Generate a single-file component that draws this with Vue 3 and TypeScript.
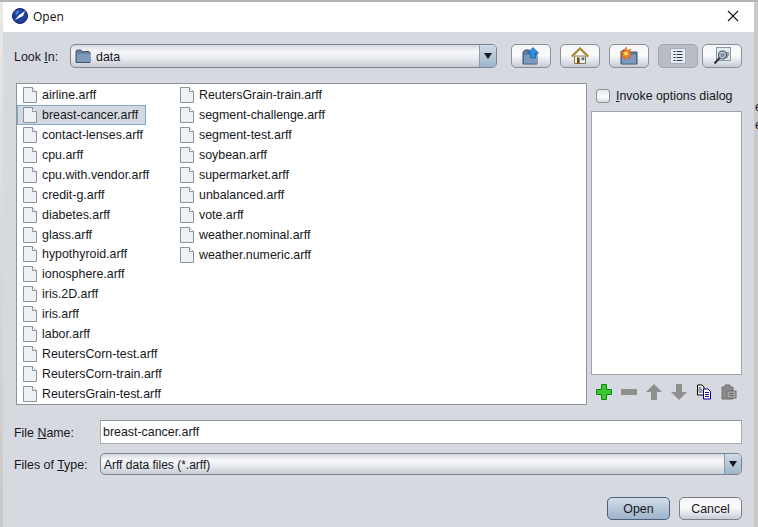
<script setup lang="ts">
const col1: string[] = ['airline.arff','breast-cancer.arff','contact-lenses.arff','cpu.arff','cpu.with.vendor.arff','credit-g.arff','diabetes.arff','glass.arff','hypothyroid.arff','ionosphere.arff','iris.2D.arff','iris.arff','labor.arff','ReutersCorn-test.arff','ReutersCorn-train.arff','ReutersGrain-test.arff']
const col2: string[] = ['ReutersGrain-train.arff','segment-challenge.arff','segment-test.arff','soybean.arff','supermarket.arff','unbalanced.arff','vote.arff','weather.nominal.arff','weather.numeric.arff']
const columns = [col1, col2]
const selected = 'breast-cancer.arff'
</script>

<template>
  <div class="page">
    <div class="strip-left"></div>
    <div class="window">
      <header class="titlebar">
        <svg class="app-icon" width="16" height="16" viewBox="0 0 16 16">
          <circle cx="8" cy="8" r="7.5" fill="#1d3f9c"/>
          <circle cx="8" cy="8" r="7.5" fill="none" stroke="#12235f" stroke-width="1"/>
          <path d="M3 12 L7 7 L13 3 L11 8 L7 10 Z" fill="#fff"/>
          <path d="M3 5 A6 6 0 0 1 8 2 L5 7 Z" fill="#4c86d8"/>
        </svg>
        <span class="title">Open</span>
        <svg class="close" width="12" height="12" viewBox="0 0 12 12">
          <path d="M1 1 L11 11 M11 1 L1 11" stroke="#111" stroke-width="1.1" fill="none"/>
        </svg>
      </header>

      <div class="body">
        <div class="lookin">
          <label class="lookin-label">Look <u>I</u>n:</label>
          <div class="combo lookin-combo">
            <svg width="16" height="16" viewBox="0 0 16 16" class="combo-icon">
              <path d="M1 14.5 V3 L2 2 H6 L7 3.5 H14 L15 4.5 V14.5 Z" fill="#68829f" stroke="#3e5470"/>
              <path d="M2 6 H15 V14 H2 Z" fill="#7f9ab8"/>
            </svg>
            <span class="combo-text">data</span>
            <span class="combo-arrow"><i></i></span>
          </div>
          <div class="tools">
            <button class="tool">
              <svg width="18" height="18" viewBox="0 0 18 18">
                <path d="M1 17 V5 L3 3 H7 L8 5 H15 V17 Z" fill="#5f7f9f" stroke="#3d5570"/>
                <path d="M2 8 H15 V16.5 H2 Z" fill="#7c9abc"/>
                <path d="M11 0.5 L16.5 6 H13.5 V11 H8.5 V6 H5.5 Z" fill="#2e8fdc" stroke="#145a9c" stroke-width="0.7"/>
              </svg>
            </button>
            <button class="tool">
              <svg width="18" height="18" viewBox="0 0 18 18">
                <path d="M3.5 9 V16.5 H14.5 V9 Z" fill="#f6f3e6" stroke="#6b5b2c" stroke-width="0.8"/>
                <path d="M0.8 9.5 L9 1.5 L17.2 9.5" fill="none" stroke="#8a6a1a" stroke-width="2"/>
                <path d="M0.8 9.5 L9 1.5 L17.2 9.5" fill="none" stroke="#dcae3c" stroke-width="0.9"/>
                <rect x="6" y="10.5" width="2.6" height="6" fill="#6a4a1c"/>
                <rect x="10.5" y="10.5" width="2.8" height="2.6" fill="#3f6ea6"/>
              </svg>
            </button>
            <button class="tool">
              <svg width="18" height="18" viewBox="0 0 18 18">
                <path d="M1 17 V5 L3 3 H7 L8 5 H17 V17 Z" fill="#5f7f9f" stroke="#3d5570"/>
                <path d="M2 8 H16 V16.5 H2 Z" fill="#7c9abc"/>
                <path d="M6 0 L7.2 3.6 L11 2 L9.2 5.6 L12.5 7 L9 8.2 L10.4 12 L6.8 10 L5 13 L4.2 9.6 L0.6 10 L3 7 L0.4 4.4 L4 4.4 Z" fill="#f58a12" stroke="#e4471a" stroke-width="0.5"/>
                <circle cx="6" cy="6.6" r="1.8" fill="#ffe48a"/>
              </svg>
            </button>
            <button class="tool tool-on">
              <svg width="16" height="16" viewBox="0 0 16 16">
                <rect x="0.5" y="0.5" width="15" height="15" fill="#e9eef4" stroke="#9fb0c2"/>
                <path d="M3.5 3.5h2M3.5 6.5h2M3.5 9.5h2M3.5 12.5h2M6.5 3.5h6M6.5 6.5h6M6.5 9.5h6M6.5 12.5h6" stroke="#2b3440" stroke-width="1"/>
              </svg>
            </button>
            <button class="tool">
              <svg width="18" height="18" viewBox="0 0 18 18">
                <rect x="3.5" y="0.5" width="14" height="13" fill="#e4e9ef" stroke="#8a97a6"/>
                <path d="M12 6h4M12 8h4M12 10h3" stroke="#555"/>
                <circle cx="9.5" cy="8" r="4" fill="#b6c6d8" stroke="#45525f" stroke-width="1.1"/>
                <path d="M7.5 7.2h4M7.5 9h4" stroke="#586778"/>
                <path d="M6.5 11 L1.5 16.5" stroke="#2a2f36" stroke-width="2"/>
              </svg>
            </button>
          </div>
        </div>

        <div class="main">
          <div class="list">
            <div v-for="(col, i) in columns" :key="i" class="list-col">
              <div v-for="f in col" :key="f" class="file" :class="{ selected: f === selected }">
                <svg class="file-icon" width="14" height="16" viewBox="0 0 14 16">
                  <path d="M0.5 0.5 H9.5 L13.5 4.5 V15.5 H0.5 Z" fill="#eef2f7" stroke="#8a929c"/>
                  <path d="M9.5 0.5 V4.5 H13.5" fill="#fbfcfd" stroke="#8a929c"/>
                </svg>
                <span>{{ f }}</span>
              </div>
            </div>
          </div>
          <aside class="side">
            <label class="check-row">
              <span class="check"></span>
              <span><u>I</u>nvoke options dialog</span>
            </label>
            <div class="preview"></div>
            <div class="mini-tools">
              <svg width="16" height="16" viewBox="0 0 16 16">
                <path d="M5.5 0.5 H10.5 V5.5 H15.5 V10.5 H10.5 V15.5 H5.5 V10.5 H0.5 V5.5 H5.5 Z" fill="#3cc92e" stroke="#0d8a0d"/>
              </svg>
              <svg width="16" height="16" viewBox="0 0 16 16"><rect x="0" y="5" width="16" height="6" fill="#8f8f8f"/></svg>
              <svg width="16" height="16" viewBox="0 0 16 16"><path d="M8 0 L16 8 H11 V16 H5 V8 H0 Z" fill="#8f8f8f"/></svg>
              <svg width="16" height="16" viewBox="0 0 16 16"><path d="M8 16 L16 8 H11 V0 H5 V8 H0 Z" fill="#8f8f8f"/></svg>
              <svg width="16" height="16" viewBox="0 0 16 16">
                <path d="M1.5 1 H6 L8 3 V11 H1.5 Z" fill="#fff" stroke="#000"/>
                <path d="M2.5 4h3M2.5 6h4M2.5 8h4" stroke="#000" stroke-width="0.8"/>
                <path d="M7.5 5 H12 L14.5 7.5 V15 H7.5 Z" fill="#fff" stroke="#00008a"/>
                <path d="M9 8.5h4M9 10.5h4M9 12.5h4" stroke="#00008a" stroke-width="0.9"/>
              </svg>
              <svg width="16" height="16" viewBox="0 0 16 16">
                <path d="M1 3 H4 V1 H9 V3 H12 V15 H1 Z" fill="#8a8a8a" stroke="#707070"/>
                <rect x="6" y="7" width="9" height="7" fill="#a5a5a5" stroke="#707070"/>
                <path d="M8 9.5h5M8 11.5h5" stroke="#707070"/>
              </svg>
            </div>
          </aside>
        </div>

        <div class="form-row name-row">
          <label class="form-label">File <u>N</u>ame:</label>
          <div class="input">breast-cancer.arff</div>
        </div>
        <div class="form-row type-row">
          <label class="form-label">Files of <u>T</u>ype:</label>
          <div class="combo type-combo">
            <span class="combo-text">Arff data files (*.arff)</span>
            <span class="combo-arrow"><i></i></span>
          </div>
        </div>

        <div class="actions">
          <button class="btn btn-primary">Open</button>
          <button class="btn">Cancel</button>
        </div>
      </div>
    </div>
    <div class="strip-right">
      <span>e</span>
      <span>e</span>
    </div>
  </div>
</template>

<style>
html, body { margin: 0; padding: 0; overflow: hidden; }
</style>

<style scoped>
.page {
  width: 758px;
  height: 527px;
  display: flex;
  padding-top: 2px;
  box-sizing: border-box;
  background: #b4b4b4;
  font-family: "Liberation Sans", Arial, sans-serif;
  font-size: 12.4px;
  color: #16181c;
  overflow: hidden;
}
.strip-left { width: 3px; flex: none; background: linear-gradient(#e8e8e8, #c8c8c8); }
.strip-right {
  width: 4px;
  flex: none;
  box-sizing: border-box;
  background: #c9c9c9;
  overflow: hidden;
  padding: 96px 0 0 1px;
  display: flex;
  flex-direction: column;
  line-height: 18px;
  font-size: 12px;
}
.strip-right span { display: block; }
.window {
  width: 751px;
  flex: none;
  display: flex;
  flex-direction: column;
  background: #d6d9e0;
}
.titlebar {
  height: 30px;
  flex: none;
  box-sizing: border-box;
  background: #fff;
  display: flex;
  align-items: center;
  padding: 0 15px 2px 9px;
}
.app-icon { flex: none; }
.title {
  margin-left: 5px;
  font-family: "Open Sans", "Noto Sans", sans-serif;
  font-size: 12px;
  color: #111;
}
.close { margin-left: auto; }
.body {
  flex: 1;
  display: flex;
  flex-direction: column;
  padding: 12px 12px 0 11px;
  min-height: 0;
}
.lookin { display: flex; align-items: center; height: 24px; }
.lookin-label { width: 56px; flex: none; padding-top: 1px; }
u { text-underline-offset: 1px; }
.combo {
  display: flex;
  align-items: center;
  box-sizing: border-box;
  border: 1px solid #7b8494;
  border-radius: 5px;
  background: linear-gradient(#d4d8df 0%, #f6f7f9 30%, #eceef2 55%, #c8ccd4 100%);
  position: relative;
  overflow: hidden;
}
.lookin-combo { width: 427px; height: 24px; padding-left: 4px; flex: none; }
.combo-icon { margin-right: 5px; flex: none; }
.combo-text { flex: 1; white-space: nowrap; padding-top: 1px; }
.combo-arrow {
  width: 16px;
  align-self: stretch;
  flex: none;
  background: linear-gradient(#d0dbe6, #9db4ca);
  border-left: 1px solid #8f9aa8;
  display: flex;
  align-items: center;
  justify-content: center;
}
.combo-arrow i {
  width: 0;
  height: 0;
  border-left: 4px solid transparent;
  border-right: 4px solid transparent;
  border-top: 6px solid #14181e;
}
.tools { display: flex; margin-left: 14px; gap: 9px; }
.tool {
  width: 40px;
  height: 24px;
  box-sizing: border-box;
  padding: 0;
  border: 1px solid #8b8f96;
  border-radius: 5px;
  background: linear-gradient(#f4f5f7 0%, #fbfbfc 45%, #dfe2e8 75%, #c6cad2 100%);
  display: flex;
  align-items: center;
  justify-content: center;
}
.tool:nth-child(5) { margin-left: -5px; }
.tool-on { background: #b8bcc4; border-color: #a2a6ae; }
.main { display: flex; margin: 15px 0 0 2px; height: 322px; }
.list {
  width: 571px;
  flex: none;
  box-sizing: border-box;
  background: #fff;
  border: 1px solid #8f949c;
  display: flex;
  padding: 1px 0 0;
}
.list-col { display: flex; flex-direction: column; align-items: flex-start; }
.list-col:first-child { width: 157px; }
.file {
  height: 20px;
  box-sizing: border-box;
  display: flex;
  align-items: center;
  padding: 0 7px 0 5px;
  white-space: nowrap;
  border: 1px solid transparent;
}
.file-icon { flex: none; margin-right: 5px; }
.file.selected { background: #d4d9e1; border-color: #7fa8cf; }
.side {
  width: 151px;
  margin-left: 4px;
  display: flex;
  flex-direction: column;
  flex: none;
}
.check-row { display: flex; align-items: center; height: 24px; padding: 1px 0 0 5px; box-sizing: border-box; }
.check {
  width: 14px;
  height: 14px;
  box-sizing: border-box;
  border: 1px solid #8b8f96;
  border-radius: 3px;
  background: linear-gradient(#e8eaee, #fbfbfc 60%, #d8dbe1);
  margin-right: 6px;
}
.preview {
  margin-top: 4px;
  height: 264px;
  background: #fff;
  border: 1px solid #9fa3aa;
  box-sizing: border-box;
}
.mini-tools {
  display: flex;
  align-items: center;
  gap: 9px;
  padding: 9px 0 0 5px;
}
.form-row { display: flex; align-items: center; }
.form-label { width: 89px; flex: none; margin-left: -3px; padding: 1px 0 0 3px; box-sizing: border-box; }
.name-row { margin-top: 15px; height: 24px; }
.type-row { margin-top: 9px; height: 22px; }
.input {
  width: 642px;
  height: 24px;
  box-sizing: border-box;
  background: #fff;
  border: 1px solid #a8acb3;
  border-top-color: #8f939a;
  padding-left: 2px;
  line-height: 23px;
}
.type-combo { width: 642px; height: 22px; padding-left: 3px; font-size: 12px; }
.actions {
  display: flex;
  justify-content: flex-end;
  gap: 9px;
  margin-top: 22px;
}
.btn {
  width: 63px;
  height: 23px;
  box-sizing: border-box;
  padding: 0;
  font: inherit;
  color: inherit;
  border: 1px solid #7b8088;
  border-radius: 5px;
  background: linear-gradient(#f4f5f7 0%, #fbfbfc 45%, #dfe2e8 75%, #c6cad2 100%);
}
.btn-primary {
  border-color: #4b5f78;
  background: linear-gradient(#d2dde8 0%, #b6c8da 50%, #9db4ca 100%);
}
</style>
